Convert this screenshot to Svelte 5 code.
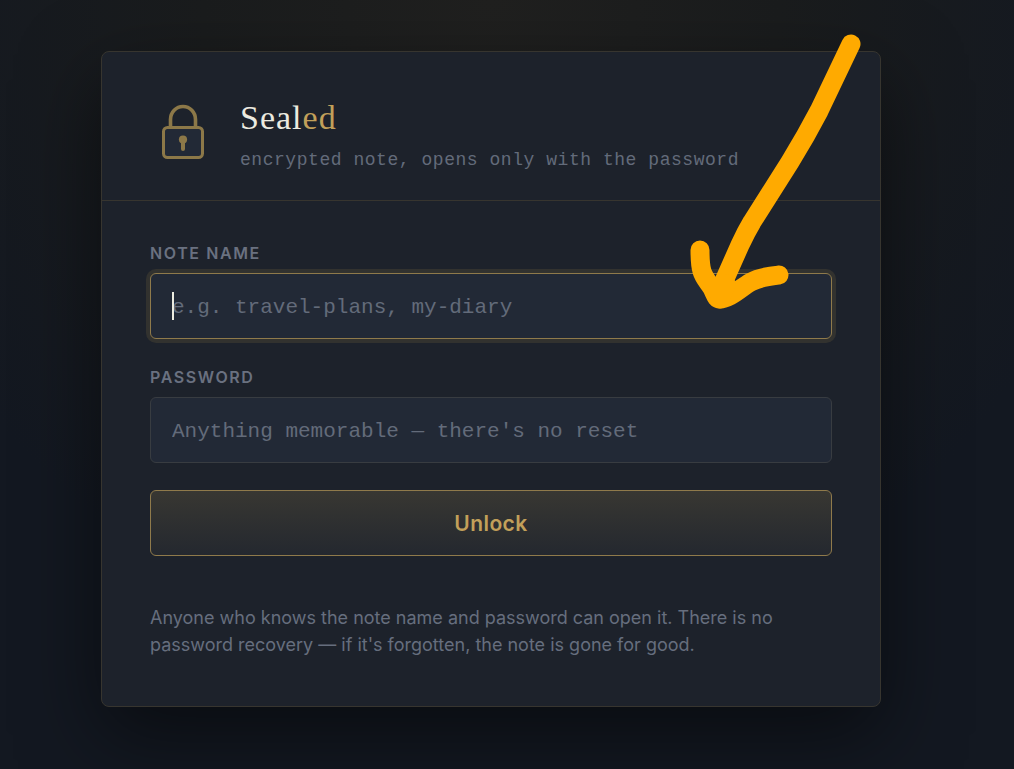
<script>
  let noteName = $state('');
  let password = $state('');
</script>

<main class="page">
  <section class="card">
    <header class="head">
      <svg class="lock" viewBox="0 7 66 66" width="66" height="66" aria-hidden="true">
        <path d="M20.500 32V24.500a12.500 13 0 0 1 25 0V32" fill="none" stroke="#8c7848" stroke-width="3.600" />
        <rect x="13.500" y="32.500" width="39" height="30" rx="4" fill="#222936" stroke="#8c7848" stroke-width="3" />
        <circle cx="33" cy="44.600" r="4.100" fill="#8c7848" />
        <path d="M33 45v9" stroke="#8c7848" stroke-width="4" stroke-linecap="round" />
      </svg>
      <div>
        <h1>Seal<span>ed</span></h1>
        <p class="tagline">encrypted note, opens only with the password</p>
      </div>
    </header>
    <div class="body">
      <form onsubmit={(e) => e.preventDefault()}>
        <div class="fields">
          <div class="field">
            <label for="note">NOTE NAME</label>
            <div class="control">
              <input id="note" class="active" type="text" placeholder="e.g. travel-plans, my-diary" bind:value={noteName} />
              {#if !noteName}<span class="caret"></span>{/if}
            </div>
          </div>
          <div class="field">
            <label for="password">PASSWORD</label>
            <input id="password" type="password" placeholder="Anything memorable — there's no reset" bind:value={password} />
          </div>
        </div>
        <button type="submit">Unlock</button>
      </form>
      <p class="note">
        Anyone who knows the note name and password can open it. There is no password recovery — if it's forgotten, the note is gone for good.
      </p>
    </div>
    <svg class="arrow" viewBox="0 0 200 300" width="200" height="300" aria-hidden="true">
      <path d="M171 24L139 91Q126 116 110 142L72 202Q66 212 60 225L40 270" />
      <path d="M20 230C20 256 24 256 32 268C36 276 36 279 40 279C50 279 60 268 71 262C80 257 90 256 99 255" />
      <path d="M40 279L46 264" />
    </svg>
  </section>
</main>

<style>
  :global(body) {
    margin: 0;
    background: #131821;
  }
  .page {
    box-sizing: border-box;
    min-height: 100vh;
    padding: 51px 133px 62px 101px;
    font-family: Inter, sans-serif;
    color: #666e7e;
    background: radial-gradient(ellipse 640px 660px at 491px 0, #20201f 0%, #1a1c1d 45%, #131821 100%);
    overflow: hidden;
  }
  .card {
    position: relative;
    border: 1px solid #37352f;
    border-radius: 8px;
    background: #1d222b;
    box-shadow: 0 28px 80px rgba(0, 0, 0, 0.5);
  }
  .head {
    display: flex;
    align-items: center;
    gap: 24px;
    padding: 44px 48px 26px;
    border-bottom: 1px solid #37352f;
  }
  .lock {
    flex: none;
  }
  h1 {
    margin: 0;
    font: 400 34px/44px "Liberation Serif", serif;
    letter-spacing: 1px;
    color: #ecebe0;
  }
  h1 span {
    color: #c2a05a;
  }
  .tagline {
    margin: 6px 0 0;
    font: 18px/28px "Liberation Mono", monospace;
    letter-spacing: 0.03em;
    color: #636b7a;
  }
  .body {
    padding: 40px 48px 48px;
  }
  form {
    display: grid;
    gap: 27px;
  }
  .fields {
    display: grid;
    gap: 26px;
  }
  .field {
    display: grid;
    gap: 8px;
  }
  label {
    font-size: 16px;
    line-height: 24px;
    font-weight: 600;
    letter-spacing: 0.1em;
    color: #6a7180;
  }
  .control {
    position: relative;
    display: grid;
  }
  input {
    box-sizing: border-box;
    width: 100%;
    height: 66px;
    padding: 2px 21px 0;
    border: 1px solid #383c41;
    border-radius: 6px;
    background: #222936;
    color: #ecebe0;
    font: 21px "Liberation Mono", monospace;
    outline: none;
  }
  input::placeholder {
    color: #636b7a;
    opacity: 1;
  }
  input.active,
  input:focus {
    border-color: #8f7a4b;
    box-shadow: 0 0 0 4px #32322f;
  }
  .caret {
    position: absolute;
    left: 22px;
    top: 19px;
    width: 2px;
    height: 28px;
    background: #ecebe0;
  }
  button {
    height: 66px;
    border: 1px solid #8f7a4b;
    border-radius: 6px;
    background: linear-gradient(#383732, #24282f);
    color: #c2a05a;
    font: 600 21px Inter, sans-serif;
    letter-spacing: 0.02em;
  }
  .note {
    margin: 48px 0 0;
    font-size: 18px;
    line-height: 27px;
  }
  .arrow {
    position: absolute;
    right: 0;
    top: -32px;
    pointer-events: none;
  }
  .arrow path {
    fill: none;
    stroke: #ffaa00;
    stroke-width: 19;
    stroke-linecap: round;
    stroke-linejoin: round;
  }
</style>
